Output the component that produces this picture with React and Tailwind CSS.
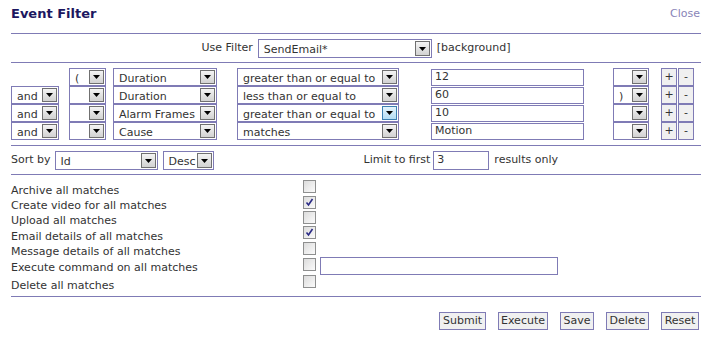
import React from "react";

const Arrow = ({ hot }) => (
  <div
    className={
      "flex h-full w-[15px] shrink-0 items-end justify-center border pb-[4px] " +
      (hot
        ? "border-[#3c7fb1] bg-gradient-to-b from-[#e5f4fc] to-[#b3dcf4]"
        : "border-[#707070] bg-gradient-to-b from-[#f4f4f4] to-[#d2d2d2]")
    }
  >
    <svg width="7" height="4" viewBox="0 0 7 4">
      <path d="M0 0h7L3.5 4z" fill="#000" />
    </svg>
  </div>
);

function Select({ w, h = "h-[18px]", text, hot }) {
  return (
    <div className={`flex ${h} shrink-0 border border-[#7f7bb5] bg-white p-px ${w}`}>
      <div className="flex-1 truncate pl-[4px] pt-px leading-[15px]">{text}</div>
      <Arrow hot={hot} />
    </div>
  );
}

function TextBox({ w, h = "h-[18px]", value }) {
  return (
    <div className={`flex ${h} shrink-0 items-center border border-[#7f7bb5] bg-white pl-[3px] pt-px ${w}`}>
      {value}
    </div>
  );
}

function Check({ on }) {
  return (
    <div className="mb-[9px] ml-[292px] flex h-[13px] w-[13px] shrink-0 items-center justify-center border border-[#8e8f8f] bg-gradient-to-br from-[#dcdcdc] to-[#fbfbfb]">
      {on && (
        <svg width="9" height="9" viewBox="0 0 9 9">
          <path d="M1.5 4.5l2 2.5 4-6" stroke="#2a2a85" strokeWidth="1.6" fill="none" />
        </svg>
      )}
    </div>
  );
}

const rows = [
  { and: null, open: "(", field: "Duration", op: "greater than or equal to", value: "12", close: "" },
  { and: "and", open: "", field: "Duration", op: "less than or equal to", value: "60", close: ")" },
  { and: "and", open: "", field: "Alarm Frames", op: "greater than or equal to", value: "10", close: "", hot: true },
  { and: "and", open: "", field: "Cause", op: "matches", value: "Motion", close: "" },
];

const actions = [
  { label: "Archive all matches", h: "h-[16px]" },
  { label: "Create video for all matches", h: "h-[15px]", on: true },
  { label: "Upload all matches", h: "h-[15px]" },
  { label: "Email details of all matches", h: "h-[16px]", on: true },
  { label: "Message details of all matches", h: "h-[15px]" },
  { label: "Execute command on all matches", h: "h-[17px]", cmd: true },
  { label: "Delete all matches", h: "h-[18px]" },
];

const buttons = [
  ["Submit", "w-[47px]"],
  ["Execute", "w-[50px]"],
  ["Save", "w-[34px]"],
  ["Delete", "w-[43px]"],
  ["Reset", "w-[38px]"],
];

const Line = () => <div className="h-px bg-[#7f7bb5]" />;

export default function App() {
  return (
    <div className="h-[340px] w-[708px] bg-white pl-[11px] font-['DejaVu_Sans',Verdana,sans-serif] text-[11px] text-[#333]">
      <div className="w-[690px]">
        <div className="flex h-[33px] items-start justify-between pt-[5px]">
          <span className="text-[13px] font-bold leading-[18px] text-[#1c1760]">Event Filter</span>
          <span className="mr-[1px] pt-[1px] leading-[16px] text-[#8884b8]">Close</span>
        </div>
        <Line />

        <div className="flex h-[28px] items-center justify-center">
          <span className="mr-[5px]">Use Filter</span>
          <Select w="w-[174px]" h="h-[19px]" text="SendEmail*" />
          <span className="ml-[5px]">[background]</span>
        </div>
        <Line />

        <div className="flex flex-col pb-[5px] pt-[5px]">
          {rows.map((r, i) => (
            <div key={i} className="flex h-[18px] items-center">
              {r.and ? <Select w="w-[48px]" text={r.and} /> : <div className="w-[48px] shrink-0" />}
              <div className="ml-[10px]">
                <Select w="w-[37px]" text={r.open} />
              </div>
              <div className="ml-[7px]">
                <Select w="w-[104px]" text={r.field} />
              </div>
              <div className="ml-[20px]">
                <Select w="w-[162px]" text={r.op} hot={r.hot} />
              </div>
              <div className="ml-[32px]">
                <TextBox w="w-[153px]" h="h-[17px]" value={r.value} />
              </div>
              <div className="ml-[29px]">
                <Select w="w-[36px]" text={r.close} />
              </div>
              <div className="ml-[12px] flex h-[18px] w-[16px] items-center justify-center border border-[#7f7bb5] bg-[#f0f0f0]">+</div>
              <div className="ml-px flex h-[18px] w-[16px] items-center justify-center border border-[#7f7bb5] bg-[#f0f0f0]">-</div>
            </div>
          ))}
        </div>
        <Line />

        <div className="flex h-[28px] items-center">
          <span className="mr-[4px]">Sort by</span>
          <Select w="w-[103px]" h="h-[19px]" text="Id" />
          <div className="ml-[5px]">
            <Select w="w-[51px]" h="h-[19px]" text="Desc" />
          </div>
          <span className="ml-[150px] mr-[3px]">Limit to first</span>
          <TextBox w="w-[56px]" h="h-[19px]" value="3" />
          <span className="ml-[5px]">results only</span>
        </div>
        <Line />

        <div className="flex flex-col pb-[1px] pt-[8px]">
          {actions.map((a) => (
            <div key={a.label} className={`flex items-center ${a.h}`}>
              <span className="w-0 whitespace-nowrap">{a.label}</span>
              <Check on={a.on} />
              {a.cmd && (
                <div className="-mt-[6px] ml-[4px]">
                  <TextBox w="w-[238px]" h="h-[18px]" value="" />
                </div>
              )}
            </div>
          ))}
        </div>
        <Line />

        <div className="flex justify-end gap-[12px] pr-[2px] pt-[15px]">
          {buttons.map(([label, w]) => (
            <div
              key={label}
              className={`flex h-[18px] items-center justify-center border border-[#7f7bb5] bg-[#f0f0f0] ${w}`}
            >
              {label}
            </div>
          ))}
        </div>
      </div>
    </div>
  );
}
